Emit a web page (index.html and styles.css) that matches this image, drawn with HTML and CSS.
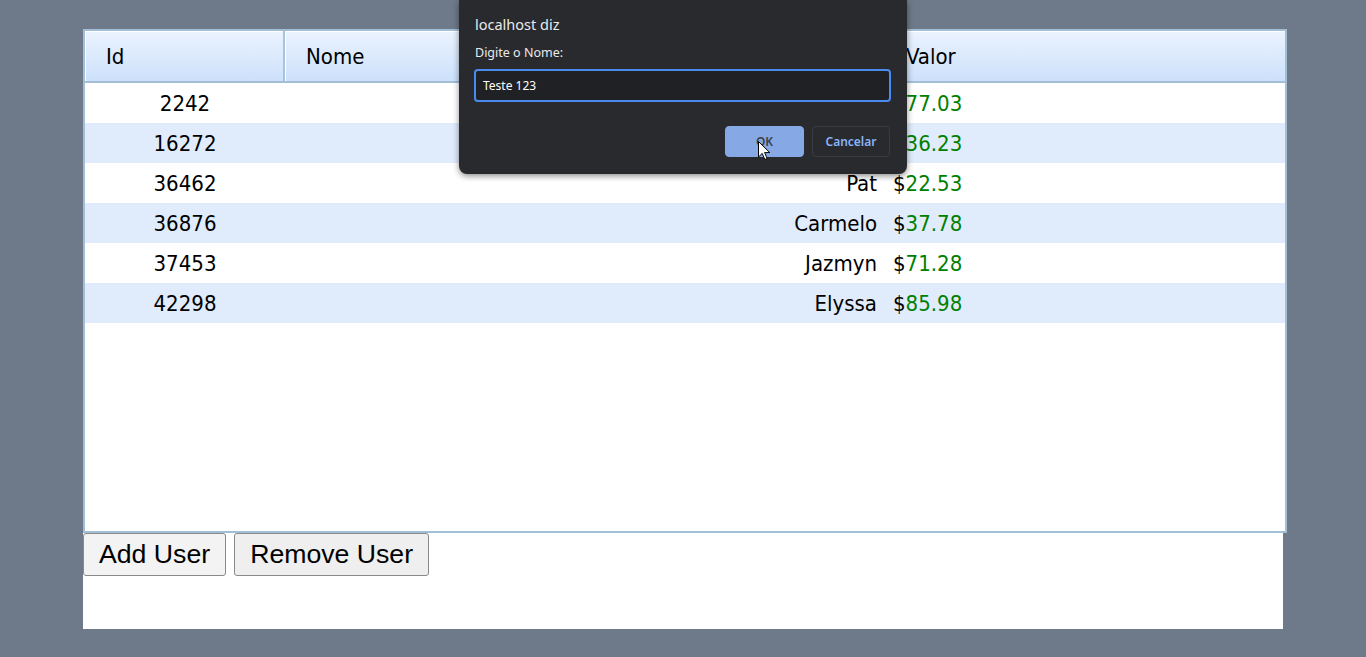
FILE: index.html
```html
<!DOCTYPE html>
<html lang="pt">
<head>
<meta charset="utf-8">
<title>Users</title>
<link rel="stylesheet" href="styles.css">
</head>
<body>
<div class="page">
  <div class="grid">
    <div class="head">
      <div class="hcell">Id</div>
      <div class="hcell">Nome</div>
      <div class="hcell">Valor</div>
    </div>
    <div class="row">
      <div class="c-id">2242</div><div class="c-name">Alvena</div><div class="c-val">$<span class="num">77.03</span></div>
    </div>
    <div class="row alt">
      <div class="c-id">16272</div><div class="c-name">Demarco</div><div class="c-val">$<span class="num">36.23</span></div>
    </div>
    <div class="row">
      <div class="c-id">36462</div><div class="c-name">Pat</div><div class="c-val">$<span class="num">22.53</span></div>
    </div>
    <div class="row alt">
      <div class="c-id">36876</div><div class="c-name">Carmelo</div><div class="c-val">$<span class="num">37.78</span></div>
    </div>
    <div class="row">
      <div class="c-id">37453</div><div class="c-name">Jazmyn</div><div class="c-val">$<span class="num">71.28</span></div>
    </div>
    <div class="row alt">
      <div class="c-id">42298</div><div class="c-name">Elyssa</div><div class="c-val">$<span class="num">85.98</span></div>
    </div>
  </div>
  <div class="actions">
    <button class="btn btn-add">Add User</button>
    <button class="btn">Remove User</button>
  </div>
</div>

<div class="dialog">
  <div class="d-title">localhost diz</div>
  <div class="d-label">Digite o Nome:</div>
  <div class="d-input">Teste 123</div>
  <div class="d-buttons">
    <div class="d-ok">OK</div>
    <div class="d-cancel">Cancelar</div>
  </div>
</div>
<svg class="cursor" width="13" height="20" viewBox="0 0 13 20"><path d="M0.5 0.5 L0.5 16 L4.2 12.4 L6.8 18.5 L9.2 17.5 L6.6 11.6 L11.8 11.6 Z" fill="#fff" stroke="#000" stroke-width="1"/></svg>
</body>
</html>
```
FILE: styles.css
```css
html, body {
  margin: 0;
  padding: 0;
}
body {
  background: #6e7a8a;
  height: 657px;
  overflow: hidden;
  position: relative;
  font-family: "DejaVu Sans Condensed", "DejaVu Sans", sans-serif;
}
.page {
  width: 1200px;
  height: 600px;
  margin: 29px auto 0;
  background: #fff;
}
.grid {
  width: 1200px;
  height: 500px;
  border: 2px solid #a3bfd6;
  background: #fff;
  font-size: 22px;
  color: #000;
}
.head {
  display: grid;
  grid-template-columns: 200px 600px 400px;
  height: 50px;
  border-bottom: 2px solid #a3bfd6;
  background: linear-gradient(#ebf3fe, #cde1fb);
}
.hcell {
  display: flex;
  align-items: center;
  padding-left: 21px;
  border-right: 2px solid #a8c3dc;
  box-shadow: inset 1px 1px 0 #fff;
}
.hcell:last-child {
  border-right: 0;
}
.row {
  display: grid;
  grid-template-columns: 200px 600px 400px;
  height: 40px;
  align-items: center;
}
.row.alt {
  background: #e0ecfc;
}
.c-id {
  text-align: center;
}
.c-name {
  text-align: right;
  padding-right: 8px;
}
.c-val {
  padding-left: 8px;
}
.num {
  color: #008000;
}
.actions {
  display: flex;
  gap: 8px;
  margin-left: 0;
}
.btn {
  font-family: "Liberation Sans", Arial, sans-serif;
  font-size: 26.67px;
  line-height: 31px;
  padding: 5px 15px;
  border: 1px solid #8a8a8a;
  border-radius: 3px;
  background: #efefef;
  color: #000;
  margin: 0;
}
.btn-add {
  background: #f3f3f3;
}
.dialog {
  position: absolute;
  left: 459px;
  top: 0;
  width: 448px;
  height: 174px;
  box-sizing: border-box;
  padding: 14px 16px 16px 15px;
  background: #292a2d;
  border-radius: 0 0 8px 8px;
  box-shadow: 0 2px 6px rgba(0,0,0,0.45);
  font-family: "Noto Sans", "Open Sans", sans-serif;
  color: #e8eaed;
}
.d-title {
  font-size: 14.5px;
  line-height: 20px;
  padding-left: 1px;
}
.d-label {
  font-size: 12.5px;
  line-height: 18px;
  margin-top: 10px;
  padding-left: 1px;
}
.d-input {
  margin-top: 7px;
  height: 33px;
  box-sizing: border-box;
  border: 2px solid #4b8bf0;
  border-radius: 4px;
  background: #202124;
  font-size: 12px;
  line-height: 29px;
  padding-left: 7px;
  color: #fff;
}
.d-buttons {
  display: flex;
  justify-content: flex-end;
  gap: 8px;
  margin-top: 24px;
  padding-right: 1px;
}
.d-ok, .d-cancel {
  height: 31px;
  box-sizing: border-box;
  border-radius: 4px;
  font-size: 12px;
  font-weight: 600;
  line-height: 29px;
  text-align: center;
}
.d-ok {
  width: 79px;
  background: #86a9e6;
  color: #3c3f44;
  border: 1px solid #86a9e6;
}
.d-cancel {
  width: 78px;
  border: 1px solid #3c3d41;
  color: #8ab4f8;
}
.cursor {
  position: absolute;
  left: 758px;
  top: 141px;
}
```
